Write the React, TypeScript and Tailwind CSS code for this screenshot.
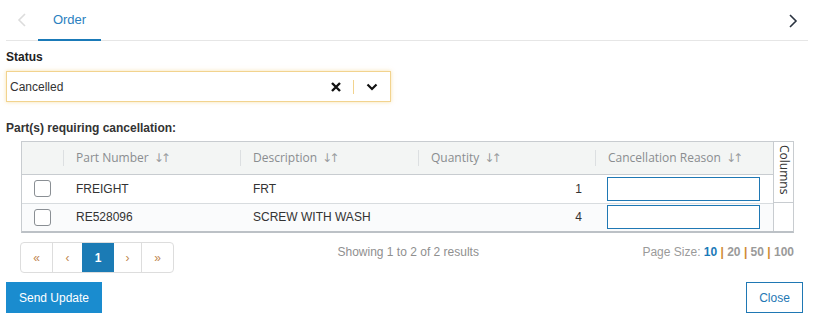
import React from "react";

const headers = ["Part Number", "Description", "Quantity", "Cancellation Reason"];

const rows = [
  { part: "FREIGHT", desc: "FRT", qty: 1 },
  { part: "RE528096", desc: "SCREW WITH WASH", qty: 4 },
];

function SortArrows() {
  return (
    <span className="ml-[5px] font-['DejaVu_Sans',sans-serif] text-[12px] tracking-[-3px] text-[#9a9da0]">↓↑</span>
  );
}

export default function App() {
  return (
    <div className="w-[815px] h-[335px] bg-white pl-[6px] pr-[7px] font-['Liberation_Sans',Arial,sans-serif] text-[12px] text-[#333]">
      {/* Tabs */}
      <div className="flex items-center h-[41px] border-b border-[#e6e6e6]">
        <svg width="10" height="16" viewBox="0 0 10 16" className="ml-[11px]">
          <path d="M8 2 L2 8 L8 14" fill="none" stroke="#dcdcdc" strokeWidth="1.6" />
        </svg>
        <div className="ml-[11px] w-[63px] h-[41px] flex items-center justify-center border-b-2 border-[#1a7ab8] text-[#2b7fc0] text-[13px] pt-[1px]">
          Order
        </div>
        <div className="flex-1" />
        <svg width="10" height="16" viewBox="0 0 10 16" className="mr-[10px] mt-[2px]">
          <path d="M2 2 L8 8 L2 14" fill="none" stroke="#2a3340" strokeWidth="1.6" />
        </svg>
      </div>

      {/* Status */}
      <div className="mt-[9px] font-bold text-[#222] leading-[14px]">Status</div>
      <div className="mt-[7px] w-[385px] h-[31px] flex items-center border border-[#f2d38e] shadow-[0_0_4px_rgba(240,200,110,0.55)] pl-[3px]">
        <span className="flex-1 text-[#333]">Cancelled</span>
        <svg width="10" height="10" viewBox="0 0 10 10" className="mr-[12px]">
          <path d="M1 1 L9 9 M9 1 L1 9" stroke="#111" strokeWidth="2.4" />
        </svg>
        <div className="w-px h-[14px] bg-[#f2d38e]" />
        <svg width="12" height="8" viewBox="0 0 12 8" className="ml-[12px] mr-[12px]">
          <path d="M1.5 1.5 L6 6 L10.5 1.5" fill="none" stroke="#111" strokeWidth="2.2" />
        </svg>
      </div>

      {/* Parts */}
      <div className="mt-[19px] font-bold text-[#333] leading-[14px]">Part(s) requiring cancellation:</div>

      <div className="mt-[6px] ml-[15px] w-[773px] flex border border-[#c8ccd0] border-b-2 border-b-[#bcc1c6]">
        <table className="w-[751px] border-collapse table-fixed">
          <colgroup>
            <col className="w-[41px]" />
            <col className="w-[177px]" />
            <col className="w-[178px]" />
            <col className="w-[177px]" />
            <col className="w-[178px]" />
          </colgroup>
          <thead>
            <tr className="h-[32px] bg-[#f3f5f4] border-b border-[#c8ccd0]">
              <th className="p-0" />
              {headers.map((h) => (
                <th key={h} className="p-0 font-normal text-left">
                  <div className="flex items-center h-[16px] border-l border-[#dcdfe1] pl-[12px] font-['Open_Sans',sans-serif] text-[12px] text-[#8a8d90]">
                    {h}
                    <SortArrows />
                  </div>
                </th>
              ))}
            </tr>
          </thead>
          <tbody>
            {rows.map((r, i) => (
              <tr
                key={r.part}
                className={`${i === 0 ? "h-[29px] border-b border-[#d8dcdf] bg-white" : "h-[28px] bg-[#fafbfc]"}`}
              >
                <td className="p-0">
                  <div className="ml-[12px] w-[17px] h-[17px] rounded-[3px] border border-[#8a8f94] bg-white" />
                </td>
                <td className="p-0 pl-[13px]">{r.part}</td>
                <td className="p-0 pl-[13px]">{r.desc}</td>
                <td className="p-0 pr-[13px] text-right">{r.qty}</td>
                <td className="p-0 pl-[12px]">
                  <div className="w-[153px] h-[24px] border border-[#1f78b4] bg-white" />
                </td>
              </tr>
            ))}
          </tbody>
        </table>
        <div className="w-[21px] flex flex-col border-l border-[#c8ccd0]">
          <div className="h-[61px] border-b border-[#c8ccd0] flex justify-center">
            <div className="[writing-mode:vertical-rl] font-['Open_Sans',sans-serif] text-[12px] text-[#333] pt-[3px] leading-[14px]">
              Columns
            </div>
          </div>
          <div className="flex-1 bg-white" />
        </div>
      </div>

      {/* Pagination */}
      <div className="flex items-start mt-[9px] ml-[14px] w-[774px]">
        <div className="flex h-[31px] border border-[#dddddd] rounded-[4px] overflow-hidden text-[#c0874f]">
          <div className="w-[32px] flex items-center justify-center border-r border-[#dddddd]">«</div>
          <div className="w-[29px] flex items-center justify-center">‹</div>
          <div className="w-[32px] flex items-center justify-center bg-[#1b7bb5] text-white font-bold">1</div>
          <div className="w-[28px] flex items-center justify-center border-r border-[#dddddd]">›</div>
          <div className="w-[31px] flex items-center justify-center">»</div>
        </div>
        <div className="flex-1 text-center text-[#8f8f8f] pt-[1px]">Showing 1 to 2 of 2 results</div>
        <div className="text-[#9a9a9a] pt-[1px]">
          Page Size: <span className="font-bold text-[#1a7ab8]">10</span>
          <span className="font-bold text-[#d08a30]"> | </span>
          <span className="font-bold">20</span>
          <span className="font-bold text-[#d08a30]"> | </span>
          <span className="font-bold">50</span>
          <span className="font-bold text-[#d08a30]"> | </span>
          <span className="font-bold">100</span>
        </div>
      </div>

      {/* Actions */}
      <div className="flex justify-between items-center mt-[9px]">
        <button className="w-[96px] h-[31px] bg-[#1a8ccf] text-white text-[12px]">Send Update</button>
        <button className="w-[57px] h-[31px] border border-[#1f78b4] text-[#1f78b4] text-[12px] bg-white mr-[5px]">
          Close
        </button>
      </div>
    </div>
  );
}
